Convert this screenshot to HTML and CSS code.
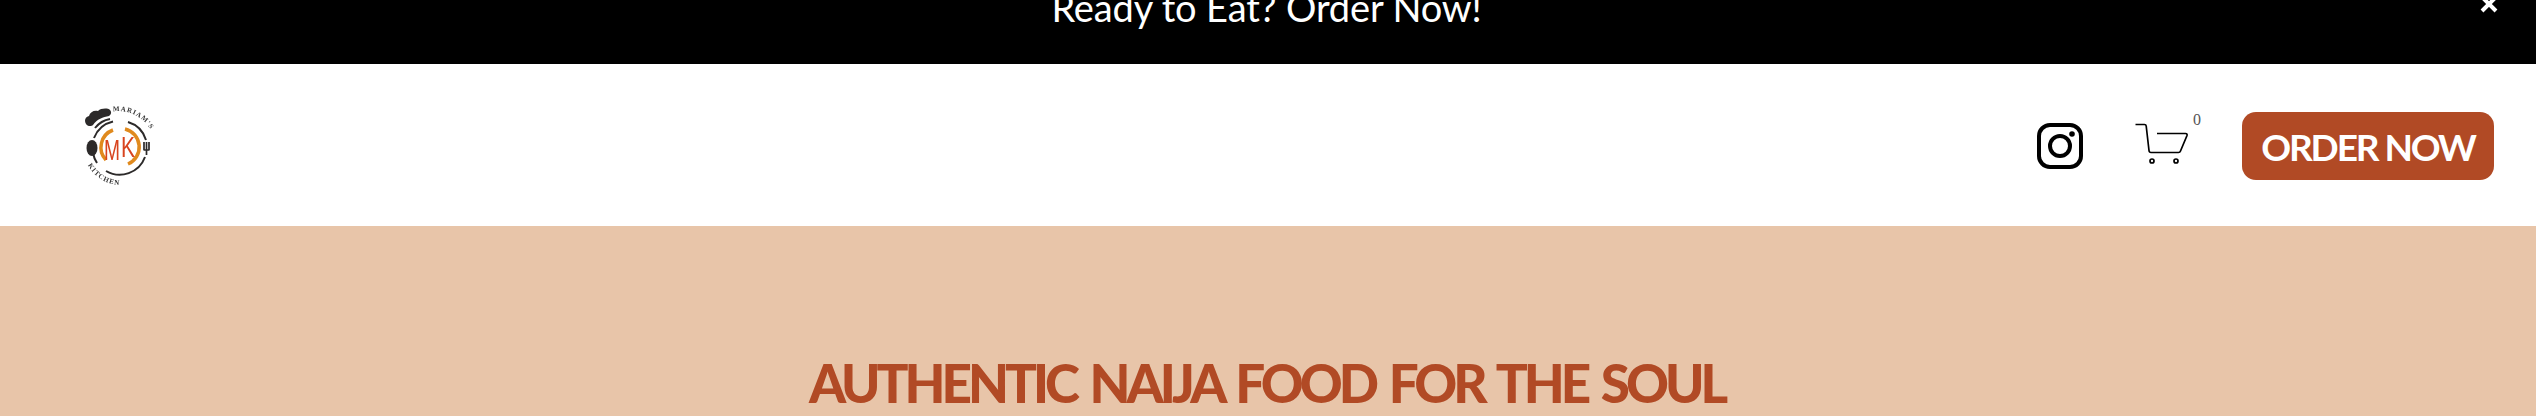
FILE: index.html
```html
<!DOCTYPE html>
<html lang="en">
<head>
<meta charset="utf-8">
<title>Mariam's Kitchen</title>
<link rel="stylesheet" href="styles.css">
</head>
<body>
<div class="banner">
  <p class="banner-text">Ready to Eat? Order Now!</p>
  <svg class="banner-close" viewBox="0 0 18 18" width="18" height="18"><path d="M2 2L16 16M16 2L2 16"/></svg>
</div>
<header class="site-header">
  <a class="logo" href="#">
    <svg class="logo-svg" viewBox="78 100 84 90" width="84" height="90">
      <path id="arc-top" class="logo-guide" d="M113 111.500A37 37 0 0 1 154 138"/>
      <path id="arc-bottom" class="logo-guide" d="M88 165A37 37 0 0 0 129 184"/>
      <path class="logo-dark" d="M86 124c-2-3-1-7 3-8 1-4 5-6 9-5 3-3 10-3 12-1 2 2 1 5-1 6-6 1-12 3-16 9-2 2-6 1-7-1z"/>
      <path class="logo-band" d="M95 128c4-5 9-8 15-9"/>
      <path class="logo-ring" d="M94 138A27 27 0 0 1 113 121.500M128 122A27 27 0 0 1 146 140M145 157A27 27 0 0 1 106 171M93 153A27 27 0 0 0 97 163"/>
      <ellipse class="logo-dark" cx="92" cy="148" rx="5.500" ry="8"/>
      <path class="logo-fork" d="M144 142v8M146.500 142v8M149 142v8M143.500 150h6M146.500 150v5"/>
      <path class="logo-mark" d="M106 160A18.500 18.500 0 0 1 113 130M125 129A18.500 18.500 0 0 1 128 164"/>
      <text class="logo-letter" x="104" y="160" textLength="16" lengthAdjust="spacingAndGlyphs">M</text>
      <text class="logo-letter" x="121" y="157" textLength="14" lengthAdjust="spacingAndGlyphs">K</text>
      <text class="logo-script"><textPath href="#arc-top">MARIAM'S</textPath></text>
      <text class="logo-script"><textPath href="#arc-bottom">KITCHEN</textPath></text>
    </svg>
  </a>
  <div class="actions">
    <svg class="icon-instagram" viewBox="0 0 46 46" width="46" height="46">
      <rect x="2" y="2" width="42" height="42" rx="11"/>
      <circle cx="23" cy="23" r="10"/>
      <circle class="dot" cx="35" cy="11" r="2.800"/>
    </svg>
    <div class="cart">
      <svg class="icon-cart" viewBox="0 0 54 42" width="54" height="42">
        <path d="M0.500 1.500H9.500Q11 1.500 11.200 3L14 27.500Q14.200 29.500 16 29.500H43.500Q45 29.500 45.500 28L52 12.500Q52.500 10.500 50.500 10.500H22"/>
        <circle cx="17" cy="38" r="2"/>
        <circle cx="41" cy="38" r="2"/>
      </svg>
      <span class="cart-count">0</span>
    </div>
    <a class="order-btn" href="#">ORDER NOW</a>
  </div>
</header>
<main class="hero">
  <h1 class="hero-title">AUTHENTIC NAIJA FOOD FOR THE SOUL</h1>
</main>
</body>
</html>
```
FILE: styles.css
```css
* { box-sizing: border-box; }
html, body { margin: 0; padding: 0; height: 416px; overflow: hidden; background: #fff; }
body { font-family: "Lato", "Open Sans", sans-serif; }

.banner {
  height: 64px;
  background: #000;
  color: #fff;
  overflow: hidden;
  display: flex;
  justify-content: center;
  position: relative;
}
.banner-text {
  margin: -17px 0 0 -3px;
  font-size: 38px;
  line-height: 48px;
  font-weight: 400;
  letter-spacing: -0.150px;
}
.banner-close {
  position: absolute;
  left: 2480px;
  top: -5px;
}
.banner-close path { fill: none; stroke: #fff; stroke-width: 4; }

.site-header {
  height: 162px;
  background: #fff;
  display: flex;
  align-items: center;
  padding: 0 42px 0 78px;
}
.logo { display: block; line-height: 0; }
.logo-svg { display: block; filter: blur(0.35px); }
.logo-guide { fill: none; stroke: none; }
.logo-dark { fill: #2c2a2a; }
.logo-band, .logo-ring, .logo-fork { fill: none; stroke: #2c2a2a; }
.logo-band { stroke-width: 2; }
.logo-ring { stroke-width: 2; }
.logo-fork { stroke-width: 1.700; }
.logo-mark { fill: none; stroke: #e08a1e; stroke-width: 3.500; }
.logo-letter {
  font-family: "Liberation Sans", sans-serif;
  font-size: 30px;
  font-weight: 400;
  fill: #d8441f;
}
.logo-script {
  font-family: "Liberation Serif", serif;
  font-size: 7px;
  font-weight: 700;
  letter-spacing: 0.900px;
  fill: #333;
}

.actions { margin-left: auto; display: flex; align-items: center; }
.icon-instagram { display: block; margin-top: 1px; }
.icon-instagram rect, .icon-instagram circle { fill: none; stroke: #000; stroke-width: 4; }
.icon-instagram .dot { fill: #000; stroke: none; }

.cart { position: relative; margin-left: 52px; margin-top: -2px; line-height: 0; }
.icon-cart { display: block; overflow: visible; }
.icon-cart path, .icon-cart circle { fill: none; stroke: #000; stroke-width: 1.700; }
.cart-count {
  position: absolute;
  left: 58px;
  top: -11px;
  font-family: "Liberation Serif", serif;
  font-size: 16px;
  line-height: 16px;
  color: #555;
}

.order-btn {
  margin-left: 53px;
  margin-top: 2px;
  width: 252px;
  height: 68px;
  background: #b14a25;
  border-radius: 14px;
  color: #fff;
  text-decoration: none;
  font-size: 37px;
  font-weight: 700;
  letter-spacing: -2.100px;
  display: flex;
  align-items: center;
  justify-content: center;
}

.hero {
  height: 190px;
  background: #e8c5a9;
  text-align: center;
  overflow: hidden;
}
.hero-title {
  margin: 0 0 0 -3px;
  padding-top: 125px;
  font-size: 53px;
  line-height: 64px;
  font-weight: 900;
  color: #b14a25;
  letter-spacing: -4px;
  word-spacing: 5px;
}
```
